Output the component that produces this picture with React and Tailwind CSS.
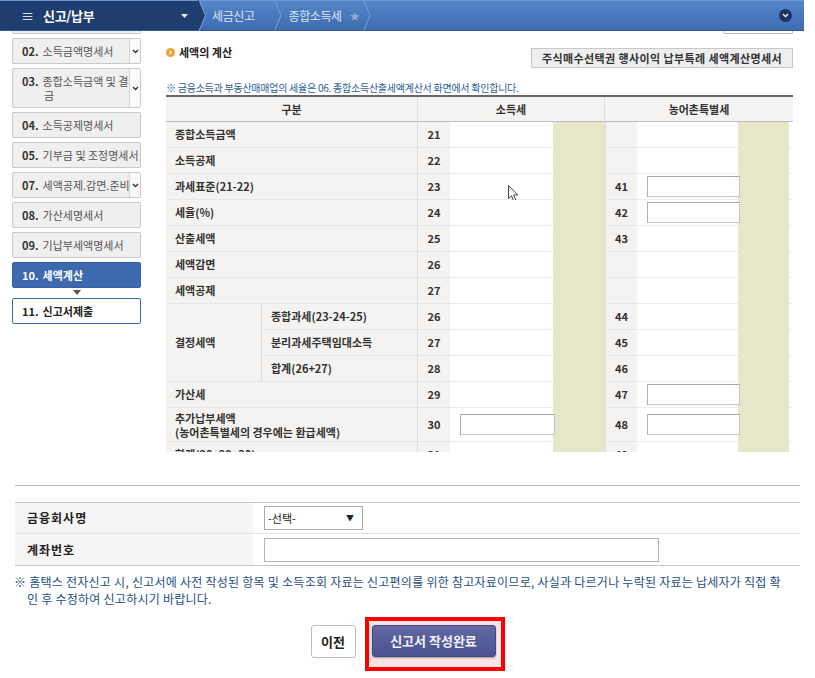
import React from "react";

function Chev({ className = "" }) {
  return (
    <svg className={className} width="7" height="5" viewBox="0 0 7 5">
      <polyline points="1,1 3.5,3.6 6,1" fill="none" stroke="#333" strokeWidth="1.4" />
    </svg>
  );
}

function SideItem({ num, text, chevron, h = "h-[26px]", line2 }) {
  return (
    <div className={`w-[129px] ${h} shrink-0 flex border border-[#c9c9c9] bg-[#efefef] rounded-[2px] overflow-hidden`}>
      <div className="flex-1 min-w-0 pl-[9px] flex flex-col justify-center text-[11px] leading-[14px] whitespace-nowrap overflow-hidden">
        <div>
          <span className="font-bold text-[#333]">{num}</span>
          <span className="text-[#555] ml-[4px]">{text}</span>
        </div>
        {line2 && <div className="text-[#555] pl-[22px]">{line2}</div>}
      </div>
      {chevron && (
        <div className="w-[11px] shrink-0 bg-[#fafafa] border-l border-[#d4d4d4] flex items-center justify-center">
          <Chev />
        </div>
      )}
    </div>
  );
}

const LABEL = "flex items-center pl-[9px] text-[11px] font-bold text-[#333] bg-[#f4f3f1] border-b border-[#e7e6e4]";
const NUM = "flex items-center justify-center text-[11px] font-bold text-[#333] bg-[#f4f3f1] border-b border-[#e7e6e4]";
const VAL = "relative bg-white border-b border-[#ececec]";
const BEIGE = "bg-[#e6e6c9]";
const INPUT = "h-[21px] bg-white border border-[#c4c4c4] border-t-[#a8a8a8] border-l-[#b0b0b0]";

function Row({ label, n1, n2, in1, in2, cursor, sub }) {
  return (
    <>
      {label !== undefined && (
        <div className={`${LABEL} ${sub ? "col-span-1 pl-[8px]" : "col-span-2"} border-r border-r-[#dcdcdc]`}>{label}</div>
      )}
      <div className={NUM}>{n1}</div>
      <div className={`${VAL} flex items-center pl-[10px]`}>
        {in1 && <div className={`${INPUT} w-[95px] shrink-0`} />}
        {cursor && (
          <svg className="absolute left-[58px] top-[11px]" width="11" height="17" viewBox="0 0 11 17">
            <path d="M0.5 0.5 L0.5 13.5 L3.5 10.8 L5.8 16.2 L7.9 15.3 L5.7 10 L9.8 10 Z" fill="white" stroke="#444" strokeWidth="1" />
          </svg>
        )}
      </div>
      <div className={BEIGE} />
      <div className={`${NUM} border-l border-l-[#dedede]`}>{n2}</div>
      <div className={`${VAL} flex items-center pl-[10px]`}>
        {in2 && <div className={`${INPUT} w-[93px] shrink-0`} />}
      </div>
      <div className={BEIGE} />
      <div className={VAL} />
    </>
  );
}

export default function App() {
  return (
    <div className="w-[815px] h-[678px] bg-white overflow-hidden text-[#333] font-['Noto_Sans_CJK_KR','Noto_Sans',sans-serif]">
      {/* top bar */}
      <div className="w-[804px] h-[31px] flex items-center bg-linear-to-b from-[#5586c8] to-[#3d6cb0] border-t border-t-[#6f98d2] border-b border-b-[#2f5a95]">
        <div className="h-full w-[199px] bg-[#1f3d6e] flex items-center pl-[21px]">
          <span className="text-white text-[13px] leading-none mr-[9px]">≡</span>
          <span className="text-white text-[13px] font-bold tracking-[-0.3px]">신고/납부</span>
          <svg className="ml-auto mr-[11px]" width="7" height="4" viewBox="0 0 7 4">
            <polygon points="0,0 7,0 3.5,4" fill="#e8eef8" />
          </svg>
        </div>
        <svg width="8" height="31" viewBox="0 0 8 31" className="shrink-0 -ml-px">
          <polygon points="0,0 1,0 7.5,15.5 1,31 0,31" fill="#1f3d6e" />
          <polyline points="1,0 7.5,15.5 1,31" fill="none" stroke="#7ea3d8" strokeWidth="1" />
        </svg>
        <span className="ml-[6px] text-[12px] text-[#dbe6f6] tracking-[-0.4px]">세금신고</span>
        <svg width="8" height="31" viewBox="0 0 8 31" className="shrink-0 ml-[19px]">
          <polyline points="0.5,0 7,15.5 0.5,31" fill="none" stroke="#79a0d6" strokeWidth="1" />
        </svg>
        <span className="ml-[7px] text-[12px] text-[#dbe6f6] tracking-[-0.4px]">종합소득세</span>
        <span className="ml-[8px] text-[10px] text-[#93acd3]">★</span>
        <svg width="8" height="31" viewBox="0 0 8 31" className="shrink-0 ml-[3px]">
          <polyline points="0.5,0 7,15.5 0.5,31" fill="none" stroke="#79a0d6" strokeWidth="1" />
        </svg>
        <div className="flex-1" />
        <div className="w-[13px] h-[13px] rounded-full bg-[#1c3260] flex items-center justify-center mr-[12px]">
          <svg width="7" height="5" viewBox="0 0 7 5">
            <polyline points="1,1 3.5,3.6 6,1" fill="none" stroke="#fff" strokeWidth="1.3" />
          </svg>
        </div>
      </div>

      {/* upper scroll region */}
      <div className="flex h-[421px] overflow-hidden">
        {/* sidebar */}
        <div className="w-[166px] shrink-0 pl-[12px] flex flex-col gap-[4px]">
          <div className="w-[129px] h-[3px] border-x border-b border-[#c9c9c9] bg-[#efefef] rounded-b-[2px]" />
          <SideItem num="02." text="소득금액명세서" chevron />
          <SideItem num="03." text="종합소득금액 및 결손" chevron h="h-[40px]" line2="금" />
          <SideItem num="04." text="소득공제명세서" />
          <SideItem num="05." text="기부금 및 조정명세서" />
          <SideItem num="07." text="세액공제.감면.준비금" chevron />
          <SideItem num="08." text="가산세명세서" />
          <SideItem num="09." text="기납부세액명세서" />
          <div className="w-[129px] h-[26px] shrink-0 flex items-center pl-[9px] bg-[#3e69ae] border border-[#3560a3] rounded-[2px] text-[11px] font-bold text-white">
            10.<span className="ml-[4px]">세액계산</span>
          </div>
          <div className="w-[129px] h-[2px] shrink-0 flex justify-center">
            <div className="-mt-[2px] w-0 h-0 border-x-[4px] border-x-transparent border-t-[5px] border-t-[#555]" />
          </div>
          <div className="w-[129px] h-[26px] shrink-0 flex items-center pl-[9px] bg-white border border-[#3e69ae] rounded-[2px] text-[11px] font-bold text-[#222]">
            11.<span className="ml-[4px]">신고서제출</span>
          </div>
        </div>

        {/* main */}
        <div className="w-[627px] shrink-0">
          <div className="flex justify-end">
            <div className="w-[70px] h-[3px] border-x border-b border-[#bbb] rounded-b-[2px]" />
          </div>
          <div className="flex justify-between items-start mt-[14px]">
            <div className="-mt-[3px] flex items-center gap-[4px] text-[11px] leading-[14px] font-bold text-[#222]">
              <span className="w-[9px] h-[9px] rounded-full bg-[#f0a030] flex items-center justify-center">
                <svg width="5" height="5" viewBox="0 0 5 5">
                  <polyline points="1.5,0.8 3.3,2.5 1.5,4.2" fill="none" stroke="#fff" strokeWidth="1.2" />
                </svg>
              </span>
              세액의 계산
            </div>
            <div className="w-[262px] h-[20px] flex items-center justify-center bg-[#eeeeee] border border-[#c8c8c8] text-[11px] font-bold text-[#333] tracking-[0.4px]">
              주식매수선택권 행사이익 납부특례 세액계산명세서
            </div>
          </div>
          <div className="mt-[13px] h-[14px] text-[10px] leading-[14px] text-[#2a5d9a] tracking-[-0.25px] whitespace-nowrap">
            ※ 금융소득과 부동산매매업의 세율은 06. 종합소득산출세액계산서 화면에서 확인합니다.
          </div>

          {/* table */}
          <div className="border-t-2 border-[#666] grid grid-cols-[96px_156px_32px_103px_52px_32px_101px_51px_4px] grid-rows-[25px_repeat(11,26px)_34px_26px]">
            <div className="col-span-2 flex items-center justify-center text-[11px] font-bold bg-[#f4f3f1] border-b border-[#bdbdbd] border-r border-r-[#dedede]">구분</div>
            <div className="col-span-3 flex items-center justify-center text-[11px] font-bold bg-[#f4f3f1] border-b border-[#bdbdbd] border-r border-r-[#dedede]">소득세</div>
            <div className="col-span-4 flex items-center justify-center text-[11px] font-bold bg-[#f4f3f1] border-b border-[#bdbdbd]">농어촌특별세</div>

            <Row label="종합소득금액" n1="21" n2="" />
            <Row label="소득공제" n1="22" n2="" />
            <Row label="과세표준(21-22)" n1="23" n2="41" in2 cursor />
            <Row label="세율(%)" n1="24" n2="42" in2 />
            <Row label="산출세액" n1="25" n2="43" />
            <Row label="세액감면" n1="26" n2="" />
            <Row label="세액공제" n1="27" n2="" />
            <div className={`${LABEL} row-span-3 border-r border-r-[#dcdcdc]`}>결정세액</div>
            <Row sub label="종합과세(23-24-25)" n1="26" n2="44" />
            <Row sub label="분리과세주택임대소득" n1="27" n2="45" />
            <Row sub label="합계(26+27)" n1="28" n2="46" />
            <Row label="가산세" n1="29" n2="47" in2 />
            <Row
              label={
                <div className="leading-[14px]">
                  <div>추가납부세액</div>
                  <div>(농어촌특별세의 경우에는 환급세액)</div>
                </div>
              }
              n1="30"
              n2="48"
              in1
              in2
            />
            <Row label="합계(28+29+30)" n1="31" n2="49" />
          </div>
        </div>
      </div>

      {/* bottom section */}
      <div className="px-[15px]">
        <div className="mt-[33px] border-t border-[#bbb]" />
        <div className="mt-[16px] border-t border-[#c8c8c8]">
          <div className="flex h-[31px] border-b border-[#e4e4e4]">
            <div className="w-[238px] bg-[#f5f5f5] flex items-center pl-[12px] text-[12px] font-bold text-[#222] tracking-[1px]">금융회사명</div>
            <div className="flex-1 flex items-center pl-[11px]">
              <div className="w-[99px] h-[24px] border border-[#a9a9a9] bg-white flex items-center justify-between pl-[3px] pr-[8px] text-[11px] text-[#222]">
                <span>-선택-</span>
                <span className="text-[8px]">▼</span>
              </div>
            </div>
          </div>
          <div className="flex h-[32px] border-b border-[#c8c8c8]">
            <div className="w-[238px] bg-[#f5f5f5] flex items-center pl-[12px] text-[12px] font-bold text-[#222] tracking-[1px]">계좌번호</div>
            <div className="flex-1 flex items-center pl-[11px]">
              <div className="w-[395px] h-[24px] border border-[#b4b4b4] bg-white" />
            </div>
          </div>
        </div>
        <div className="mt-[7px] -ml-[1px] text-[12px] leading-[17px] text-[#1d4f82] tracking-[0.25px] whitespace-nowrap">
          <div>※ 홈택스 전자신고 시, 신고서에 사전 작성된 항목 및 소득조회 자료는 신고편의를 위한 참고자료이므로, 사실과 다르거나 누락된 자료는 납세자가 직접 확</div>
          <div className="pl-[13px]">인 후 수정하여 신고하시기 바랍니다.</div>
        </div>
      </div>

      <div className="mt-[10px] flex justify-center items-start">
        <div className="mt-[8px] w-[45px] h-[33px] flex items-center justify-center bg-white border border-[#bdbdbd] rounded-[3px] text-[13px] font-bold text-[#222]">
          이전
        </div>
        <div className="ml-[9px] border-4 border-[#ff0000] bg-[#fde4e4] pt-[4px] pl-[3px] pr-[5px] pb-[10px]">
          <div className="w-[124px] h-[32px] flex items-center justify-center rounded-[3px] bg-linear-to-b from-[#6168a4] to-[#4b518c] border border-[#444a80] text-[13px] font-bold text-[#f3f2ff] shadow-[0_1px_2px_rgba(0,0,0,0.35)]">
            신고서 작성완료
          </div>
        </div>
      </div>
    </div>
  );
}
